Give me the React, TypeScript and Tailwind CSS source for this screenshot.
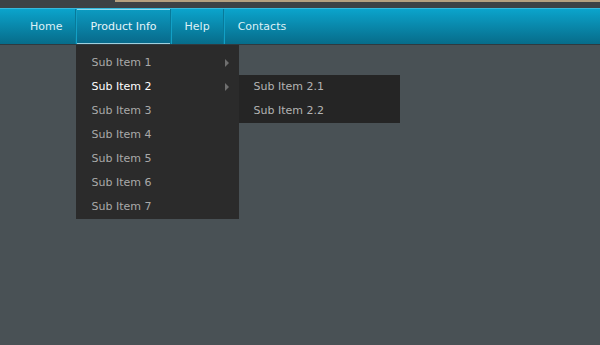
import React from "react";

const font = { fontFamily: '"DejaVu Sans", Verdana, sans-serif' };

const subItems = ["Sub Item 1", "Sub Item 2", "Sub Item 3", "Sub Item 4", "Sub Item 5", "Sub Item 6", "Sub Item 7"];

const Arrow: React.FC = () => (
  <span className="w-0 h-0 border-y-[4px] border-y-transparent border-l-[4px] border-l-[#6f6f6f]" />
);

const App: React.FC = () => {
  return (
    <div className="min-h-screen bg-[#495155] text-[11px]" style={font}>
      {/* strip above the bar */}
      <div className="flex h-[2px]">
        <div className="w-[115px] bg-[#3d4245]" />
        <div className="flex-1 bg-[#b5a07f]" />
      </div>
      <div className="h-[6px] bg-[#3d4245]" />

      <nav className="h-[37px] flex pl-[17px] bg-gradient-to-b from-[#0ba4cc] to-[#076c8a] border-t border-[#35b9dc] border-b border-b-[#2f3a40]">
        <div className="flex items-center pt-[2px] px-[13px] text-[#dcf1f7] border-r border-[#087a9a]">Home</div>

        <div className="relative flex items-center pt-[2px] px-[13px] text-[#e6f5fa] border-r border-[#087a9a] border-l border-l-[#12a0c6] bg-gradient-to-b from-[#0c9cc2] to-[#08698a] shadow-[inset_0_1px_0_#8fdcf0,inset_0_-1px_0_#9fd0de]">
          Product Info
          {/* dropdown */}
          <div className="absolute left-[-1px] top-[36px] w-[163px] bg-[#2b2b2b] pt-[6px] z-10">
            {subItems.map((s, i) => (
              <div
                key={s}
                className={`relative h-6 flex items-center justify-between pl-[15px] pr-[10px] ${
                  i === 1 ? "text-white" : "text-[#a9a9a9]"
                }`}
              >
                <span>{s}</span>
                {i < 2 && <Arrow />}
                {i === 1 && (
                  <div className="absolute left-[163px] top-0 w-[161px] bg-[#252525]">
                    {["Sub Item 2.1", "Sub Item 2.2"].map((t) => (
                      <div key={t} className="h-6 flex items-center pl-[14px] text-[#b3b3b3]">
                        {t}
                      </div>
                    ))}
                  </div>
                )}
              </div>
            ))}
          </div>
        </div>

        <div className="flex items-center pt-[2px] px-[13px] text-[#dcf1f7] border-r border-[#087a9a] border-l border-l-[#12a0c6]">Help</div>
        <div className="flex items-center pt-[2px] px-[13px] text-[#dcf1f7] border-l border-l-[#12a0c6]">Contacts</div>
      </nav>
    </div>
  );
};

export default App;
